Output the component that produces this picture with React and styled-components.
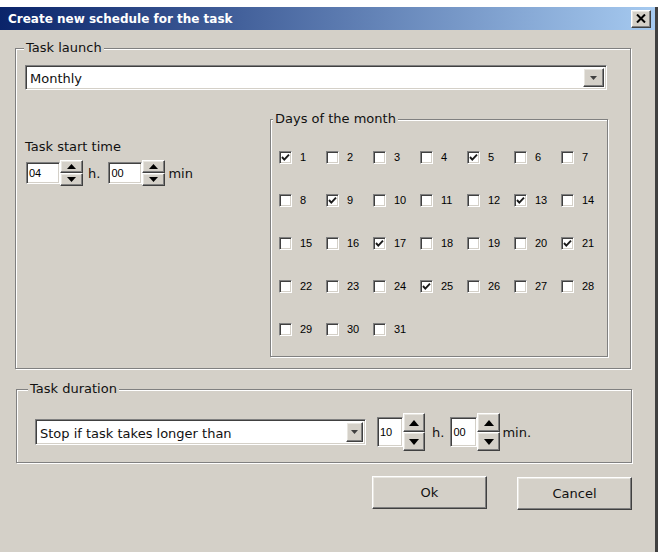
import React from "react";
import styled, { createGlobalStyle } from "styled-components";

const GlobalStyle = createGlobalStyle`
  html, body { margin: 0; padding: 0; background: #ffffff; }
  body { font-family: "DejaVu Sans", "Liberation Sans", sans-serif; color: #000; }
  * { box-sizing: border-box; }
`;

const Window = styled.div`
  margin-top: 7px;
  width: 658px;
  height: 545px;
  background: #d4d0c8;
  border-right: 3px solid #404040;
  display: flex;
  flex-direction: column;
`;

const TitleBar = styled.div`
  height: 23px;
  flex: none;
  display: flex;
  align-items: center;
  justify-content: space-between;
  padding: 0 4px 0 8px;
  background: linear-gradient(to right, #0a246a, #a6caf0);
  color: #fff;
  font-family: "DejaVu Sans", sans-serif;
  font-weight: bold;
  font-size: 12px;
`;

const raised = `
  background: #d4d0c8;
  border: 1px solid;
  border-color: #ffffff #404040 #404040 #ffffff;
  box-shadow: inset -1px -1px 0 #808080, inset 1px 1px 0 #e8e6e0;
`;

const sunken = `
  border: 1px solid;
  border-color: #808080 #ffffff #ffffff #808080;
  box-shadow: inset 1px 1px 0 #404040, inset -1px -1px 0 #d4d0c8;
`;

const CloseButton = styled.div`
  ${raised}
  width: 20px;
  height: 18px;
  display: flex;
  align-items: center;
  justify-content: center;
`;

const Body = styled.div`
  padding: 18px 24px 0 15px;
  display: flex;
  flex-direction: column;
`;

const Group = styled.div`
  border: 1px solid #808080;
  box-shadow: inset 1px 1px 0 #ffffff, 1px 1px 0 #ffffff;
  display: flex;
  flex-direction: column;
  width: ${(p) => p.$w}px;
  ${(p) => (p.$h ? `height: ${p.$h}px;` : "")}
  margin-left: ${(p) => p.$ml || 0}px;
  margin-top: ${(p) => p.$mt || 0}px;
  flex: none;
`;

const Legend = styled.div`
  align-self: flex-start;
  margin: -9px 0 0 ${(p) => p.$indent}px;
  padding: 0 2px;
  background: #d4d0c8;
  font-size: 13px;
  line-height: 16px;
  white-space: nowrap;
  color: #111;
`;

const LaunchContent = styled.div`
  padding: 9px 22px 11px 9px;
  display: flex;
  flex-direction: column;
`;

const SelectBox = styled.div`
  ${sunken}
  background: #fff;
  width: ${(p) => p.$w}px;
  height: ${(p) => p.$h}px;
  display: flex;
  align-items: stretch;
  padding: 2px;
  flex: none;
`;

const SelectText = styled.div`
  flex: 1;
  display: flex;
  align-items: center;
  padding: 2px 0 0 2px;
  font-size: 13px;
  white-space: nowrap;
  color: #111;
`;

const DropButton = styled.div`
  ${raised}
  width: ${(p) => p.$w}px;
  display: flex;
  align-items: center;
  justify-content: center;
`;

const LowerRow = styled.div`
  margin-top: 29px;
  display: flex;
`;

const StartColumn = styled.div`
  width: 245px;
  flex: none;
  display: flex;
  flex-direction: column;
  padding-top: 20px;
`;

const FieldLabel = styled.div`
  font-size: 13px;
  line-height: 16px;
  margin-bottom: 5px;
  color: #111;
`;

const SpinRow = styled.div`
  display: flex;
  align-items: center;
  height: ${(p) => p.$h}px;
`;

const NumField = styled.div`
  ${sunken}
  background: #fff;
  width: ${(p) => p.$w}px;
  height: ${(p) => p.$h}px;
  margin-left: ${(p) => p.$ml || 0}px;
  display: flex;
  align-items: center;
  padding: 0 0 0 2px;
  font-family: "Liberation Sans", Arial, sans-serif;
  font-size: 11px;
  flex: none;
`;

const SpinBox = styled.div`
  width: ${(p) => p.$w}px;
  height: ${(p) => p.$h}px;
  display: flex;
  flex-direction: column;
  flex: none;
`;

const SpinHalf = styled.div`
  ${raised}
  flex: 1;
  display: flex;
  align-items: center;
  justify-content: center;
`;

const Unit = styled.span`
  font-size: 13px;
  margin: 0 ${(p) => p.$mr || 0}px 0 ${(p) => p.$ml || 0}px;
  white-space: nowrap;
  color: #111;
`;

const DaysGrid = styled.div`
  display: grid;
  grid-template-columns: repeat(7, 47px);
  grid-auto-rows: 43px;
  padding: 9px 0 0 8px;
`;

const DayItem = styled.div`
  display: flex;
  align-items: center;
  gap: 8px;
`;

const CheckBox = styled.div`
  ${sunken}
  width: 13px;
  height: 13px;
  background: #fff;
  flex: none;
  display: flex;
  align-items: center;
  justify-content: center;
`;

const DayLabel = styled.span`
  font-family: "Liberation Sans", Arial, sans-serif;
  font-size: 11px;
  line-height: 13px;
`;

const DurationRow = styled.div`
  padding: 16px 0 11px 18px;
  display: flex;
  align-items: center;
  height: 65px;
`;

const ButtonRow = styled.div`
  margin-top: 13px;
  margin-right: -1px;
  display: flex;
  justify-content: flex-end;
  gap: 30px;
`;

const PushButton = styled.div`
  ${raised}
  width: 115px;
  height: 33px;
  display: flex;
  align-items: center;
  justify-content: center;
  font-size: 13px;
  color: #111;
  margin-top: ${(p) => p.$mt || 0}px;
`;

const UpArrow = ({ w = 9, h = 5 }) => (
  <svg width={w} height={h} viewBox={`0 0 ${w} ${h}`}>
    <polygon points={`0,${h} ${w / 2},0 ${w},${h}`} fill="#000" />
  </svg>
);

const DownArrow = ({ w = 9, h = 5, color = "#000" }) => (
  <svg width={w} height={h} viewBox={`0 0 ${w} ${h}`}>
    <polygon points={`0,0 ${w},0 ${w / 2},${h}`} fill={color} />
  </svg>
);

const Spinner = ({ w, h, arrow }) => (
  <SpinBox $w={w} $h={h}>
    <SpinHalf>
      <UpArrow w={arrow[0]} h={arrow[1]} />
    </SpinHalf>
    <SpinHalf>
      <DownArrow w={arrow[0]} h={arrow[1]} />
    </SpinHalf>
  </SpinBox>
);

const Combo = ({ w, h, btn, children }) => (
  <SelectBox $w={w} $h={h}>
    <SelectText>{children}</SelectText>
    <DropButton $w={btn}>
      <DownArrow w={7} h={4} color="#404040" />
    </DropButton>
  </SelectBox>
);

const Check = () => (
  <svg width="9" height="9" viewBox="0 0 9 9">
    <polyline points="1,4 3.3,6.6 8,1.6" fill="none" stroke="#1a1a1a" strokeWidth="1.9" />
  </svg>
);

const days = Array.from({ length: 31 }, (_, i) => i + 1);
const checkedDays = new Set([1, 5, 9, 13, 17, 21, 25]);

export default function App() {
  return (
    <>
      <GlobalStyle />
      <Window>
        <TitleBar>
          <span>Create new schedule for the task</span>
          <CloseButton>
            <svg width="10" height="9" viewBox="0 0 10 9">
              <line x1="1" y1="0.5" x2="9" y2="8.5" stroke="#000" strokeWidth="2" />
              <line x1="9" y1="0.5" x2="1" y2="8.5" stroke="#000" strokeWidth="2" />
            </svg>
          </CloseButton>
        </TitleBar>
        <Body>
          <Group $w={616}>
            <Legend $indent={8}>Task launch</Legend>
            <LaunchContent>
              <Combo w={582} h={25} btn={21}>
                Monthly
              </Combo>
              <LowerRow>
                <StartColumn>
                  <FieldLabel>Task start time</FieldLabel>
                  <SpinRow $h={26}>
                    <NumField $w={34} $h={22} $ml={1}>04</NumField>
                    <Spinner w={23} h={26} arrow={[9, 5]} />
                    <Unit $ml={5} $mr={8}>h.</Unit>
                    <NumField $w={34} $h={22}>00</NumField>
                    <Spinner w={23} h={26} arrow={[9, 5]} />
                    <Unit $ml={3}>min</Unit>
                  </SpinRow>
                </StartColumn>
                <Group $w={338} $h={238}>
                  <Legend $indent={2}>Days of the month</Legend>
                  <DaysGrid>
                    {days.map((d) => (
                      <DayItem key={d}>
                        <CheckBox>{checkedDays.has(d) ? <Check /> : null}</CheckBox>
                        <DayLabel>{d}</DayLabel>
                      </DayItem>
                    ))}
                  </DaysGrid>
                </Group>
              </LowerRow>
            </LaunchContent>
          </Group>

          <Group $w={616} $ml={1} $mt={20}>
            <Legend $indent={11}>Task duration</Legend>
            <DurationRow>
              <Combo w={331} h={26} btn={17}>
                Stop if task takes longer than
              </Combo>
              <NumField $w={26} $h={30} $ml={11}>10</NumField>
              <Spinner w={22} h={38} arrow={[10, 6]} />
              <Unit $ml={7} $mr={6}>h.</Unit>
              <NumField $w={27} $h={30}>00</NumField>
              <Spinner w={23} h={38} arrow={[10, 6]} />
              <Unit $ml={2}>min.</Unit>
            </DurationRow>
          </Group>

          <ButtonRow>
            <PushButton>Ok</PushButton>
            <PushButton $mt={1}>Cancel</PushButton>
          </ButtonRow>
        </Body>
      </Window>
    </>
  );
}
